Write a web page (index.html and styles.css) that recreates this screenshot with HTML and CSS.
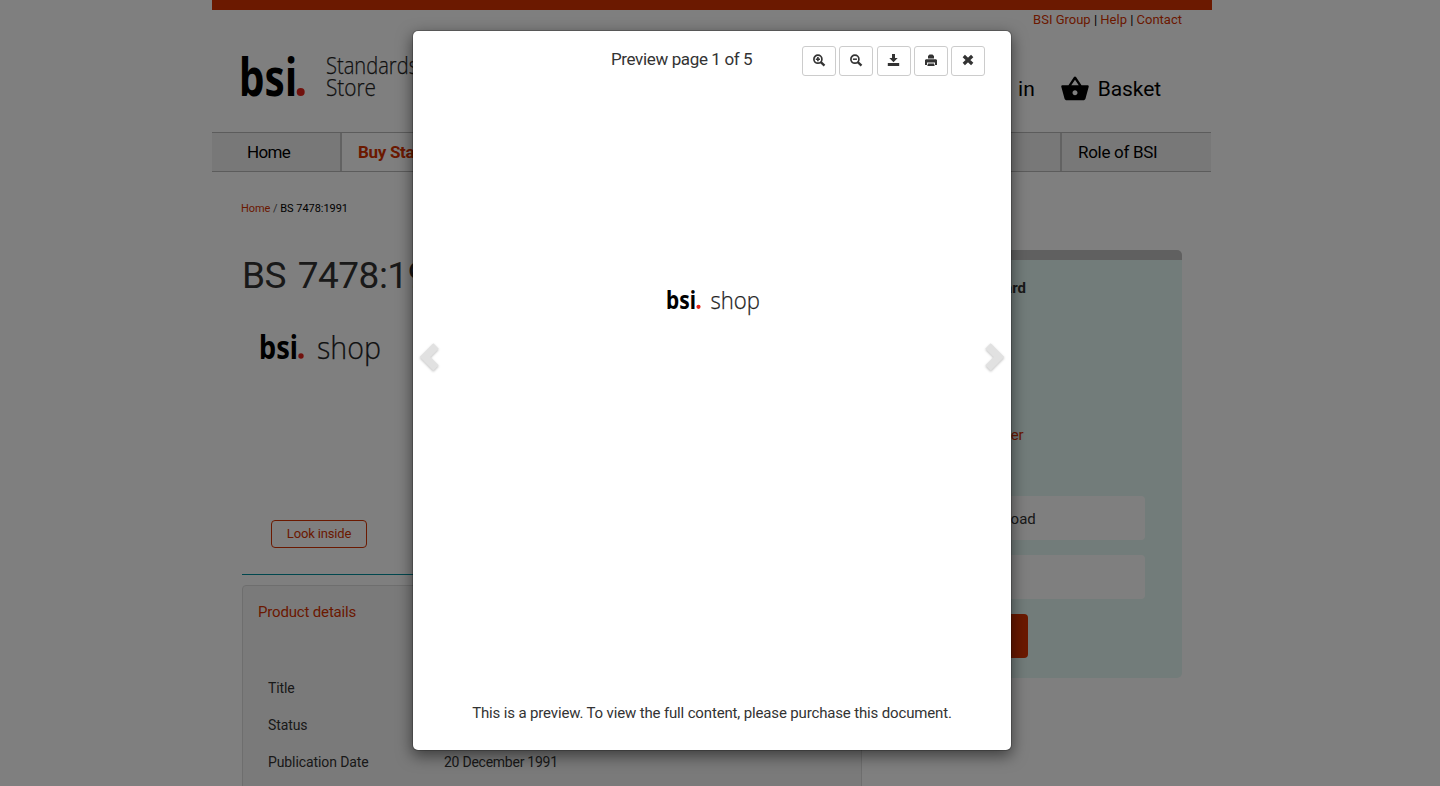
FILE: index.html
```html
<!DOCTYPE html>
<html lang="en">
<head>
<meta charset="utf-8">
<title>BS 7478:1991</title>
<link rel="stylesheet" href="styles.css">
</head>
<body>
<div class="page">
  <div class="topbar"></div>
  <header class="header">
    <div class="utility"><a>BSI Group</a> | <a>Help</a> | <a>Contact</a></div>
    <div class="brand-row">
      <svg class="logo" width="190" height="48" viewBox="0 0 190 48">
        <text class="logo-bold" x="-3" y="42.500" font-size="52" textLength="58" lengthAdjust="spacingAndGlyphs">bsi</text>
        <circle cx="58.700" cy="39" r="4" fill="#e2231a"/>
        <text class="logo-light" x="84" y="20.500" font-size="24.500" textLength="92" lengthAdjust="spacingAndGlyphs">Standards</text>
        <text class="logo-light" x="84" y="42.500" font-size="24.500" textLength="50" lengthAdjust="spacingAndGlyphs">Store</text>
      </svg>
      <div class="account">
        <span class="signin">Sign in</span>
        <svg class="basket" width="30" height="30" viewBox="0 0 24 24"><path d="M17.210 9l-4.380-6.560c-.19-.28-.51-.42-.83-.42-.32 0-.64.14-.83.43L6.790 9H2c-.55 0-1 .45-1 1 0 .09.01.18.04.27l2.540 9.270c.23.84 1 1.460 1.920 1.460h13c.92 0 1.690-.62 1.930-1.460l2.540-9.270L23 10c0-.55-.45-1-1-1h-4.790zM9 9l3-4.400L15 9H9zm3 8c-1.100 0-2-.9-2-2s.9-2 2-2 2 .9 2 2-.9 2-2 2z"/></svg>
        <span class="basket-label">Basket</span>
      </div>
    </div>
  </header>
  <nav class="nav">
    <a class="nav-home">Home</a>
    <a class="nav-active">Buy Standards</a>
    <a class="nav-rest"></a>
    <a class="nav-role">Role of BSI</a>
  </nav>
  <div class="crumbs"><a>Home</a> <i>/</i> <span class="crumb-now">BS 7478:1991</span></div>
  <div class="columns">
    <main class="product">
      <h1>BS 7478:1991</h1>
      <svg class="cover" width="126" height="40" viewBox="0 0 126 40">
        <text class="logo-bold" x="-1" y="30.500" font-size="33" textLength="39" lengthAdjust="spacingAndGlyphs">bsi</text>
        <circle cx="41" cy="28" r="2.700" fill="#e2231a"/>
        <text class="logo-light" x="57" y="30.500" font-size="32" textLength="64" lengthAdjust="spacingAndGlyphs">shop</text>
      </svg>
      <a class="look">Look inside</a>
      <section class="details">
        <h2>Product details</h2>
        <dl>
          <dt>Title</dt><dd></dd>
          <dt>Status</dt><dd></dd>
          <dt>Publication Date</dt><dd class="date">20 December 1991</dd>
        </dl>
      </section>
    </main>
    <aside class="buy">
      <strong>Standard</strong>
      <a class="member">Member</a>
      <div class="option">Download</div>
      <div class="option second"></div>
      <div class="add"></div>
    </aside>
  </div>
</div>
<div class="backdrop">
  <div class="modal">
    <div class="modal-head">
      <span class="preview">Preview page 1 of 5</span>
      <div class="tools">
        <button><svg width="14" height="14" viewBox="0 0 14 14"><circle cx="5.900" cy="5.200" r="4" fill="none" stroke="#333" stroke-width="1.700"/><path d="M8.800 8.100l3.700 3.500" stroke="#333" stroke-width="2.300"/><path d="M5.900 3.100v4.200M3.800 5.200H8" stroke="#333" stroke-width="1.600"/></svg></button>
        <button><svg width="14" height="14" viewBox="0 0 14 14"><circle cx="5.900" cy="5.200" r="4" fill="none" stroke="#333" stroke-width="1.700"/><path d="M8.800 8.100l3.700 3.500" stroke="#333" stroke-width="2.300"/><path d="M3.900 5.200h4" stroke="#333" stroke-width="1.500"/></svg></button>
        <button><svg width="14" height="14" viewBox="0 0 14 14"><path d="M5 0h3v4h2.700L6.500 8.300 2.300 4H5zM.8 9h11.400v3H.8z" fill="#333"/></svg></button>
        <button><svg width="14" height="14" viewBox="0 0 14 14"><path d="M4 4.500V2l1.500-1.500h3L10 2v2.500zM1 6l1-.7h10l1 .7v5h-2V8.500H3V11H1zM4 9.500h6l.7 2.500H3.300z" fill="#333"/></svg></button>
        <button><svg width="14" height="14" viewBox="0 0 14 14"><path d="M2.800 2l8.400 8M11.200 2l-8.400 8" stroke="#333" stroke-width="3.300"/></svg></button>
      </div>
    </div>
    <div class="modal-body">
      <svg class="chev" width="24" height="34" viewBox="0 0 24 34"><path d="M19 5L8 16 19 27" fill="none"/></svg>
      <svg class="sheet" width="100" height="32" viewBox="0 0 100 32">
        <text class="logo-bold" x="1" y="22.500" font-size="25.500" textLength="30" lengthAdjust="spacingAndGlyphs">bsi</text>
        <circle cx="33.500" cy="20.800" r="2.100" fill="#e2231a"/>
        <text class="logo-light" x="45.500" y="22.500" font-size="24.500" textLength="49.500" lengthAdjust="spacingAndGlyphs">shop</text>
      </svg>
      <svg class="chev" width="24" height="34" viewBox="0 0 24 34"><path d="M5 5l11 11L5 27" fill="none"/></svg>
    </div>
    <p class="notice">This is a preview. To view the full content, please purchase this document.</p>
  </div>
</div>
</body>
</html>
```
FILE: styles.css
```css
* { box-sizing: border-box; }
body { margin: 0; height: 786px; overflow: hidden; background: #fff; color: #333; font-family: Roboto, "Open Sans", sans-serif; font-size: 14px; }
.page { width: 1000px; height: 786px; margin-left: 212px; overflow: hidden; }
.topbar { height: 10px; background: #d63200; }
.header { height: 122px; padding: 0 30px; }
.utility { height: 20px; line-height: 20px; text-align: right; color: #000; font-size: 13px; }
a { color: #d63200; }
.brand-row { display: flex; justify-content: space-between; padding-top: 23px; }
.logo { overflow: visible; }
.logo-bold { font-family: "Noto Sans", sans-serif; font-weight: 700; fill: #000; }
.logo-light { font-family: "Open Sans", sans-serif; font-weight: 300; fill: #222; stroke: #222; stroke-width: .25px; }
.account { display: flex; height: 31px; margin-top: 21px; padding-right: 21px; line-height: 31px; font-size: 21px; color: #000; }
.signin { margin-right: 25px; word-spacing: 2px; }
.basket { margin-right: 8px; }
.basket-label { letter-spacing: -.1px; }
.nav { display: flex; width: 999px; height: 40px; border: solid #b8b8b8; border-width: 1px 0; background: #f0f0f0; line-height: 38px; font-size: 17px; letter-spacing: -.3px; }
.nav a { color: #000; padding-left: 16px; }
.nav .nav-home { width: 128px; padding-left: 35px; letter-spacing: -.7px; }
.nav .nav-active { width: 180px; border-left: 2px solid #c4c4c4; background: #fff; color: #d63200; font-weight: 700; }
.nav .nav-rest { flex: 1; }
.nav .nav-role { width: 151px; border-left: 2px solid #c4c4c4; }
.crumbs { height: 78px; padding: 29px 29px 0; line-height: 16px; font-size: 11px; letter-spacing: -.05px; color: #000; }
.crumbs i { font-style: normal; color: #555; }
.columns { display: flex; justify-content: space-between; padding: 0 30px; }
.product { width: 620px; background: linear-gradient(#008f9c, #008f9c) 0 324px / 100% 1px no-repeat; }
h1 { height: 78px; margin: 0; line-height: 52px; font-size: 37px; font-weight: 400; letter-spacing: -.5px; word-spacing: 3px; }
.cover { display: block; margin-left: 18px; overflow: visible; }
.look { display: block; width: 96px; height: 28px; margin: 152px 0 26px 29px; border: 1px solid #d63200; border-radius: 4px; line-height: 26px; text-align: center; font-size: 13px; letter-spacing: -.15px; }
.details { margin-top: 37px; height: 300px; border: 1px solid #ddd; border-radius: 4px; background: #f5f5f5; padding: 16px 15px; }
h2 { margin: 0 0 48px; height: 20px; line-height: 20px; font-size: 15px; font-weight: 400; letter-spacing: -.17px; color: #d63200; }
dl { display: grid; grid-template-columns: 176px 1fr; grid-auto-rows: 37px; margin: 0; padding-left: 10px; line-height: 37px; font-size: 14px; letter-spacing: -.1px; }
dt, dd { margin: 0; }
.date { letter-spacing: -.25px; }
.buy { width: 300px; height: 428px; border-top: 10px solid #c0c0c0; border-radius: 5px; background: #e5f8f4; padding: 18px 37px 0; display: flex; flex-direction: column; font-size: 15px; line-height: 20px; }
.buy strong { padding-left: 46px; height: 147px; }
.member { padding-left: 49px; height: 71px; }
.option { height: 44px; background: #fff; border-radius: 4px; line-height: 46px; padding-left: 50px; }
.second { margin: 15px 0; }
.add { width: 109px; height: 44px; background: #d63200; border-radius: 4px; }
.backdrop { position: absolute; inset: 0; background: rgba(0,0,0,.5); padding: 30px 0 0 412px; }
.modal { width: 600px; height: 721px; background: #fff; background-clip: padding-box; border: 1px solid rgba(0,0,0,.2); border-radius: 6px; box-shadow: 0 5px 15px rgba(0,0,0,.5); display: flex; flex-direction: column; }
.modal-head { display: flex; padding: 15px 26px 0 198px; height: 60px; }
.preview { line-height: 27px; font-size: 17px; letter-spacing: -.37px; white-space: nowrap; }
.tools { display: flex; margin-left: auto; gap: 3.250px; }
.tools button { width: 34px; height: 30px; padding: 0; border: 1px solid #ccc; border-radius: 3px; background: #fff; display: grid; place-items: center; }
.modal-body { display: flex; justify-content: space-between; height: 580px; padding: 0 4px; }
.chev { margin-top: 250px; stroke: #e1e1e1; stroke-width: 7.500; filter: drop-shadow(0 1px 1px rgba(0,0,0,.25)); }
.sheet { margin: 195px 0 0 6px; overflow: visible; }
.notice { margin: 32px 0 0; line-height: 20px; text-align: center; font-size: 15px; letter-spacing: -.15px; white-space: nowrap; }
```
